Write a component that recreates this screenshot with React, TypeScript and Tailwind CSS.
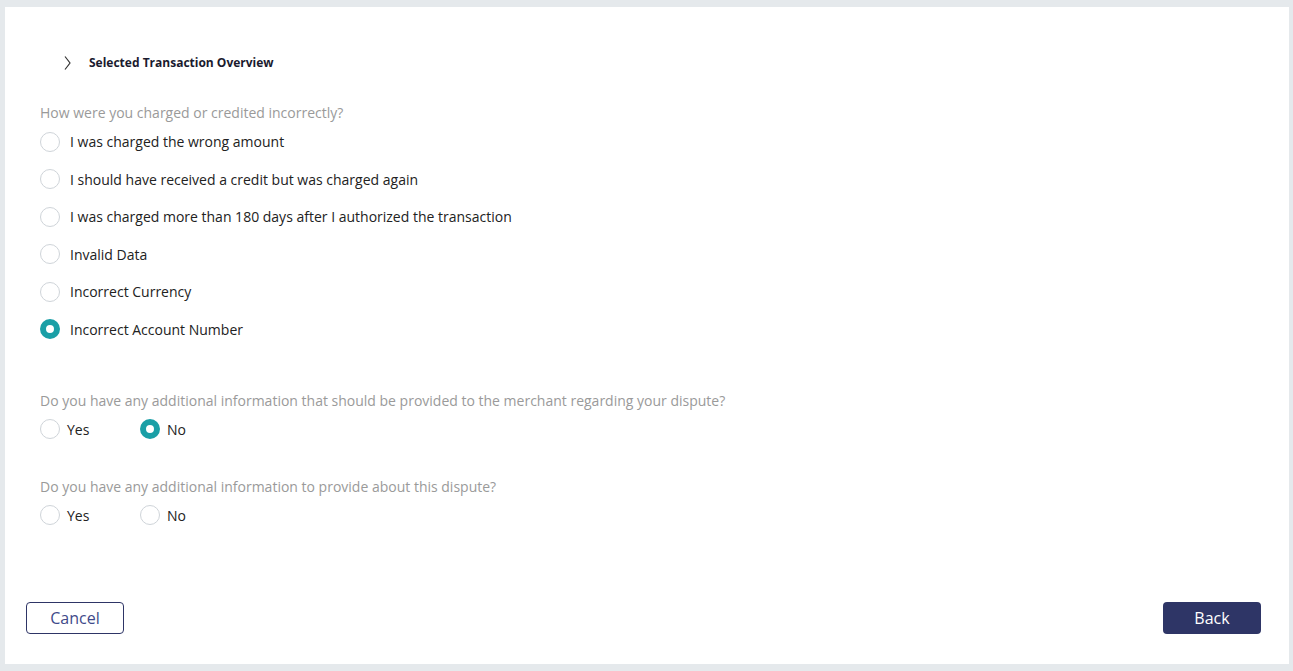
import React from "react";

function Radio({ checked }: { checked?: boolean }) {
  return checked ? (
    <span className="box-border w-[20px] h-[20px] rounded-full border-[6px] border-[#1a9fa6] bg-white shrink-0" />
  ) : (
    <span className="box-border w-[20px] h-[20px] rounded-full border border-[#cfd4d9] bg-white shrink-0" />
  );
}

function Option({ label, checked }: { label: string; checked?: boolean }) {
  return (
    <div className="flex items-center h-[37.5px] gap-[10px]">
      <Radio checked={checked} />
      <span className="text-[14px] text-[#222]">{label}</span>
    </div>
  );
}

function YesNo({ no }: { no?: boolean }) {
  return (
    <div className="flex items-center h-[30px] mt-[3px]">
      <div className="flex items-center gap-[7px] w-[100px]">
        <Radio />
        <span className="text-[14px] text-[#222]">Yes</span>
      </div>
      <div className="flex items-center gap-[7px]">
        <Radio checked={no} />
        <span className="text-[14px] text-[#222]">No</span>
      </div>
    </div>
  );
}

export default function App() {
  return (
    <div
      className="w-[1293px] h-[671px] bg-[#e5e9ec] pl-[5px] pr-[4px] pt-[7px] pb-[7px]"
      style={{ fontFamily: '"Open Sans", sans-serif' }}
    >
      <div className="bg-white h-full flex flex-col pl-[35px] pr-[28px]">
        <div className="flex items-center h-[22px] mt-[45px] pl-[23px]">
          <svg width="9" height="16" viewBox="0 0 9 16" className="mr-[17px]">
            <path d="M2 1.5 L7 8 L2 14.5" fill="none" stroke="#333" strokeWidth="1.2" />
          </svg>
          <span className="text-[12px] font-bold text-[#1a1a2e]">Selected Transaction Overview</span>
        </div>
        <div className="mt-[27px] h-[22px] flex items-center text-[14px] text-[#9a9a9a]">
          How were you charged or credited incorrectly?
        </div>
        <div className="flex flex-col">
          <Option label="I was charged the wrong amount" />
          <Option label="I should have received a credit but was charged again" />
          <Option label="I was charged more than 180 days after I authorized the transaction" />
          <Option label="Invalid Data" />
          <Option label="Incorrect Currency" />
          <Option label="Incorrect Account Number" checked />
        </div>
        <div className="mt-[41px] h-[22px] flex items-center text-[14px] text-[#9a9a9a]">
          Do you have any additional information that should be provided to the merchant regarding your dispute?
        </div>
        <YesNo no />
        <div className="mt-[31px] h-[22px] flex items-center text-[14px] text-[#9a9a9a]">
          Do you have any additional information to provide about this dispute?
        </div>
        <YesNo />
        <div className="flex justify-between mt-[72px] ml-[-14px]">
          <button className="w-[98px] h-[32px] rounded-[4px] border border-[#2e3566] bg-white text-[16px] text-[#3f4a8a]">
            Cancel
          </button>
          <button className="w-[98px] h-[32px] rounded-[4px] bg-[#2e3566] text-[16px] text-white">
            Back
          </button>
        </div>
      </div>
    </div>
  );
}
